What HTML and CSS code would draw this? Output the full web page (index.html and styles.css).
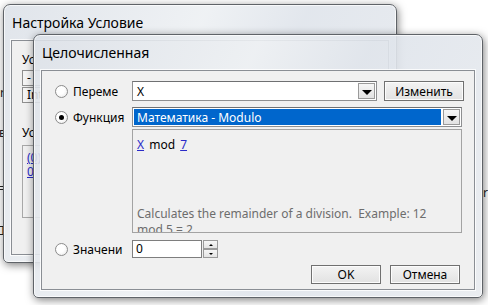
FILE: index.html
```html
<!DOCTYPE html>
<html lang="ru">
<head>
    <meta charset="UTF-8">
    <title>Целочисленная</title>
    <link rel="stylesheet" href="styles.css">
</head>
<body>
    <div class="desk">
        <!-- text of a window further behind, seen through the glass -->
        <span class="ghost" style="left:0;top:84px">r</span>
        <span class="ghost" style="left:-1px;top:124px">в</span>
        <span class="ghost" style="left:-2px;top:180px">=</span>
        <span class="ghost" style="left:-4px;top:222px">Д</span>
        <span class="ghost" style="left:483px;top:184px">r</span>

        <!-- Back window -->
        <div class="window back">
            <div class="title">Настройка Условие</div>
            <div class="client back-client">
                <div class="small-label">Ус</div>
                <div class="mini-box">-</div>
                <div class="mini-box">Integer</div>
                <div class="small-label second">Ус</div>
                <div class="mini-panel">
                    <a>(0)</a>
                    <a>0</a>
                </div>
            </div>
        </div>

        <!-- Front dialog -->
        <div class="window front">
            <div class="title">Целочисленная</div>
            <div class="client">
                <div class="row row-var">
                    <label class="opt"><span class="radio"></span><span class="opt-text">Переме</span></label>
                    <div class="combo combo-var">
                        <span class="combo-value">X</span>
                        <span class="drop"><span class="tri"></span></span>
                    </div>
                    <button class="btn btn-change">Изменить</button>
                </div>

                <div class="row row-func">
                    <label class="opt"><span class="radio checked"></span><span class="opt-text">Функция</span></label>
                    <div class="combo combo-func">
                        <span class="combo-value selected">Математика - Modulo</span>
                        <span class="drop"><span class="tri"></span></span>
                    </div>
                </div>

                <div class="desc">
                    <div class="formula"><a>X</a> mod <a>7</a></div>
                    <div class="desc-text">Calculates the remainder of a division.&nbsp; Example: 12 mod 5 = 2</div>
                </div>

                <div class="row row-val">
                    <label class="opt"><span class="radio"></span><span class="opt-text">Значени</span></label>
                    <div class="spin">
                        <span class="spin-input">0</span>
                        <span class="spin-btns">
                            <span class="spin-btn"><span class="tri-up"></span></span>
                            <span class="spin-btn"><span class="tri-down"></span></span>
                        </span>
                    </div>
                </div>

                <div class="actions">
                    <button class="btn">OK</button>
                    <button class="btn">Отмена</button>
                </div>
            </div>
        </div>
    </div>
</body>
</html>
```

FILE: styles.css
```css
body {
    margin: 0;
    background: #ffffff;
    font-family: "Noto Sans", "Open Sans", sans-serif;
    font-size: 12px;
    color: #000;
    overflow: hidden;
}
.desk {
    position: relative;
    width: 488px;
    height: 305px;
    overflow: hidden;
}
.ghost {
    position: absolute;
    font-size: 12px;
    color: #222;
}

/* Aero style windows */
.window {
    position: absolute;
    box-sizing: border-box;
    border: 1px solid #5f6368;
    border-radius: 7px 7px 5px 5px;
    background: linear-gradient(115deg, rgba(220,225,232,0.88) 0%, rgba(237,240,243,0.9) 40%, rgba(223,228,235,0.9) 60%, rgba(232,235,239,0.9) 100%);
    box-shadow: 1px 2px 9px rgba(0,0,0,0.5), inset 0 0 0 1px rgba(255,255,255,0.7);
    display: flex;
    flex-direction: column;
    padding: 0 7px 7px 7px;
}
.window.back {
    left: 3px;
    top: 4px;
    width: 394px;
    height: 259px;
}
.window.front {
    left: 33px;
    top: 34px;
    width: 450px;
    height: 264px;
}
.title {
    height: 35px;
    line-height: 36px;
    padding-left: 1px;
    font-size: 14px;
    color: #000;
    flex: none;
}
.client {
    flex: 1;
    background: #f0f0f0;
    border: 1px solid #8a8e94;
    box-shadow: 0 0 0 1px rgba(255,255,255,0.8);
    padding: 10px 10px 0 13px;
    display: flex;
    flex-direction: column;
}

/* back window content */
.back-client {
    padding: 10px 0 0 10px;
}
.small-label {
    height: 19px;
    line-height: 17px;
}
.small-label.second {
    margin-top: 20px;
    height: 19px;
}
.mini-box {
    width: 90px;
    height: 14px;
    line-height: 14px;
    border: 1px solid #8f8f8f;
    background: #f4f4f4;
    padding-left: 4px;
    margin-bottom: 1px;
}
.mini-panel {
    width: 120px;
    height: 66px;
    margin-top: 2px;
    border: 1px solid #a8a8a8;
    padding: 5px 0 0 4px;
    display: flex;
    flex-direction: column;
    line-height: 14px;
}
.mini-panel a, .formula a {
    color: #2a2ac8;
    text-decoration: underline;
}

/* front dialog rows */
.row {
    display: flex;
    align-items: center;
}
.row-var { height: 20px; }
.row-func { height: 20px; margin-top: 6px; }
.row-val { height: 18px; margin-top: 7px; }
.opt {
    width: 77px;
    flex: none;
    display: flex;
    align-items: center;
}
.opt-text {
    width: 54px;
    margin-left: 5px;
    overflow: hidden;
    white-space: nowrap;
}
.radio {
    width: 11px;
    height: 11px;
    border-radius: 50%;
    border: 1px solid #8c8c8c;
    background: radial-gradient(circle at 40% 40%, #ffffff 40%, #e4e4e4 100%);
    display: flex;
    align-items: center;
    justify-content: center;
}
.radio.checked::after {
    content: "";
    width: 5px;
    height: 5px;
    border-radius: 50%;
    background: #000;
}

.combo {
    box-sizing: border-box;
    height: 20px;
    border: 1px solid #8e8f91;
    border-top-color: #6f7072;
    background: #fff;
    display: flex;
    align-items: stretch;
    padding: 1px;
}
.combo-var { width: 245px; }
.combo-func { width: 330px; }
.combo-value {
    flex: 1;
    padding-left: 3px;
    line-height: 18px;
    white-space: nowrap;
}
.combo-value.selected {
    background: #0066cc;
    color: #fff;
    margin-right: 2px;
}
.drop {
    width: 17px;
    box-sizing: border-box;
    border: 1px solid #9a9a9a;
    background: linear-gradient(#f6f6f6, #e2e2e2);
    display: flex;
    align-items: center;
    justify-content: center;
}
.tri {
    width: 0;
    height: 0;
    border-left: 5px solid transparent;
    border-right: 5px solid transparent;
    border-top: 5px solid #000;
    margin-top: 2px;
}

.btn {
    box-sizing: border-box;
    height: 19px;
    width: 70px;
    padding: 0;
    font-family: inherit;
    font-size: 12px;
    color: #000;
    border: 1px solid #707070;
    background: linear-gradient(#f3f3f3, #e2e2e2);
    box-shadow: inset 0 0 0 1px #fcfcfc;
}
.btn-change {
    width: 80px;
    height: 20px;
    margin-left: 7px;
}

.desc {
    box-sizing: border-box;
    width: 330px;
    height: 104px;
    margin-top: 2px;
    margin-left: 77px;
    border: 1px solid #a3a3a3;
    background: #f0f0f0;
    padding: 6px 0 0 4px;
    overflow: hidden;
    position: relative;
}
.formula {
    line-height: 17px;
    color: #000;
    word-spacing: 2px;
}
.desc-text {
    position: absolute;
    left: 4px;
    top: 76px;
    width: 315px;
    color: #6d6d6d;
    line-height: 16px;
}

.spin {
    display: flex;
    align-items: stretch;
    height: 18px;
}
.spin-input {
    box-sizing: border-box;
    width: 70px;
    border: 1px solid #7e7e7e;
    background: #fff;
    padding-left: 3px;
    line-height: 16px;
}
.spin-btns {
    width: 15px;
    margin-left: 1px;
    display: flex;
    flex-direction: column;
}
.spin-btn {
    flex: 1;
    box-sizing: border-box;
    border: 1px solid #9a9a9a;
    background: linear-gradient(#f6f6f6, #e4e4e4);
    display: flex;
    align-items: center;
    justify-content: center;
}
.tri-up {
    border-left: 2px solid transparent;
    border-right: 2px solid transparent;
    border-bottom: 2px solid #000;
}
.tri-down {
    border-left: 2px solid transparent;
    border-right: 2px solid transparent;
    border-top: 2px solid #000;
}

.actions {
    display: flex;
    justify-content: flex-end;
    gap: 9px;
    margin-top: 7px;
    padding-right: 4px;
}
```
